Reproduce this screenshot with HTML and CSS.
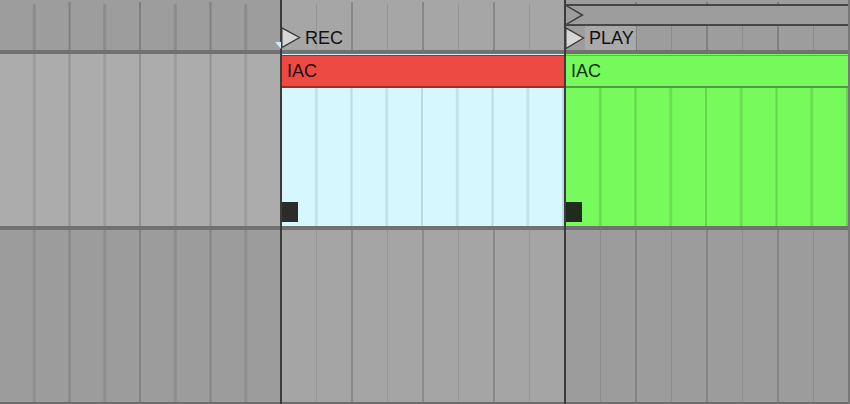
FILE: index.html
```html
<!DOCTYPE html>
<html>
<head>
<meta charset="utf-8">
<link rel="stylesheet" href="styles.css">
</head>
<body>
<div class="arr">
  <div class="col c1">
    <div class="hdr hgrid"></div>
    <div class="hdiv"></div>
    <div class="row r1 grid"></div>
    <div class="hdiv"></div>
    <div class="row r2 grid"></div>
    <div class="foot"></div>
  </div>
  <div class="col c2">
    <div class="hdr hgrid">
      <div class="marker rec">
        <svg class="brace" width="6" height="7" viewBox="0 0 6 7"><polygon points="0,0 6,0 6,7" fill="#c9eef6"/></svg>
        <svg class="tri" width="20" height="22" viewBox="0 0 20 22"><polygon points="0.8,0.8 18.5,10.5 0.8,20.5" fill="#d6d6d6" stroke="#3a3a3a" stroke-width="1.4"/></svg>
        <span class="mlabel">REC</span>
      </div>
    </div>
    <div class="hdiv"></div>
    <div class="row r1 clip red">
      <div class="clip-head">IAC</div>
      <div class="clip-body grid"><div class="stop"></div></div>
    </div>
    <div class="hdiv"></div>
    <div class="row r2 grid"></div>
    <div class="foot"></div>
  </div>
  <div class="col c3">
    <div class="hdr hgrid">
      <div class="loopbar">
        <svg width="18" height="18" viewBox="0 0 18 18"><polyline points="0,-0.5 16.5,9 0,18.5" fill="none" stroke="#3e3e3e" stroke-width="1.5"/></svg>
      </div>
      <div class="marker play">
        <svg class="tri" width="20" height="23" viewBox="0 0 20 23"><polygon points="0.8,0.8 18.5,11 0.8,21.5" fill="#d6d6d6" stroke="#3a3a3a" stroke-width="1.4"/></svg>
        <span class="mlabel boxed">PLAY</span>
      </div>
    </div>
    <div class="hdiv"></div>
    <div class="row r1 clip green">
      <div class="clip-head">IAC</div>
      <div class="clip-body grid"><div class="stop"></div></div>
    </div>
    <div class="hdiv"></div>
    <div class="row r2 grid"></div>
    <div class="foot"></div>
  </div>
</div>
</body>
</html>
```

FILE: styles.css
```css
html, body {
  margin: 0;
  padding: 0;
  background: #9c9c9c;
}
body {
  font-family: "Liberation Sans", Arial, sans-serif;
  width: 850px;
  height: 404px;
  overflow: hidden;
}
.arr {
  display: flex;
  height: 404px;
}
.col {
  display: flex;
  flex-direction: column;
  flex: none;
}
.c1 { width: 282px; }
.c2 { width: 284px; }
.c3 { width: 284px; }

.col > div {
  box-sizing: border-box;
  border-right: 2px solid #3b3b3b;
}
.c3 > div { border-right-color: #787878; }

.grid {
  --thin: rgba(0, 0, 0, 0.09);
  --beat: rgba(0, 0, 0, 0.16);
  background-image: linear-gradient(to right,
    transparent 0 calc(50% - 2px),
    var(--thin) calc(50% - 2px) 50%,
    transparent 50% calc(100% - 2px),
    var(--beat) calc(100% - 2px) 100%);
  background-size: 25% 100%;
  background-origin: border-box;
  background-clip: border-box;
}

/* header grid: short ticks start lower than beat ticks */
.hgrid {
  --thin: rgba(0, 0, 0, 0.11);
  --beat: rgba(0, 0, 0, 0.19);
  background-image:
    linear-gradient(to right,
      transparent 0 calc(50% - 2px),
      var(--thin) calc(50% - 2px) 50%,
      transparent 50%),
    linear-gradient(to right,
      transparent 0 calc(100% - 2px),
      var(--beat) calc(100% - 2px) 100%);
  background-size: 25% calc(100% - 4px), 25% calc(100% - 2px);
  background-position: 0 4px, 0 2px;
  background-repeat: repeat-x;
  background-origin: border-box;
  background-clip: border-box;
}

.hdr {
  height: 50px;
  position: relative;
  background-color: #9d9d9d;
}
.c2 .hdr { background-color: #a6a6a6; }

.hdiv {
  height: 4px;
  background: #717171;
}
.row { height: 172px; }
.r1 { background-color: #acacac; }
.r2 { background-color: #9c9c9c; }
.c2 .r2 { background-color: #a5a5a5; }
.foot {
  height: 2px;
  background: #6c6c6c;
}

/* clips */
.clip {
  display: flex;
  flex-direction: column;
}
.clip-head {
  margin-top: 1px;
  height: 33px;
  box-sizing: border-box;
  border-top: 1px solid;
  border-bottom: 2px solid;
  padding-left: 5px;
  font-size: 18px;
  line-height: 30px;
}
.clip-body {
  flex: 1;
  display: flex;
  flex-direction: column;
  justify-content: flex-end;
  padding-bottom: 4px;
}
.stop {
  width: 16px;
  height: 20px;
}

.red { background-color: #d5f7fd; }
.red .clip-head {
  background: #ee4a44;
  border-color: #9b2c27;
  color: #240c0c;
}
.red .clip-body {
  --thin: #c3e3ea;
  --beat: #bcdce3;
}
.red .stop { background: #2b2b2b; }

.green { background-color: #77fa5c; }
.green .clip-head {
  background: #76fa5b;
  border-top-color: #5fb84a;
  border-bottom-color: #4f9c3e;
  color: #182c14;
}
.green .clip-body {
  --thin: #6ade52;
  --beat: #65d64e;
}
.green .stop { background: #212a1f; }

/* markers */
.marker {
  position: absolute;
  top: 27px;
  left: -1px;
  display: flex;
  align-items: flex-start;
}
.marker .tri { display: block; flex: none; }
.brace {
  position: absolute;
  left: -6px;
  top: 15px;
}
.mlabel {
  font-size: 18px;
  line-height: 24px;
  color: #111111;
  margin-left: 4px;
  margin-top: -1px;
}
.play { top: 26px; }
.play .tri { margin-top: 1px; }
.mlabel.boxed {
  background: #a9a9a9;
  margin-left: 0;
  margin-top: 0;
  padding: 0 2px 0 4px;
  height: 24px;
}

.loopbar {
  margin-top: 4px;
  height: 22px;
  box-sizing: border-box;
  border-top: 2px solid #464646;
  border-bottom: 2px solid #464646;
  background: #9d9d9d;
}
.loopbar svg { display: block; }
```
